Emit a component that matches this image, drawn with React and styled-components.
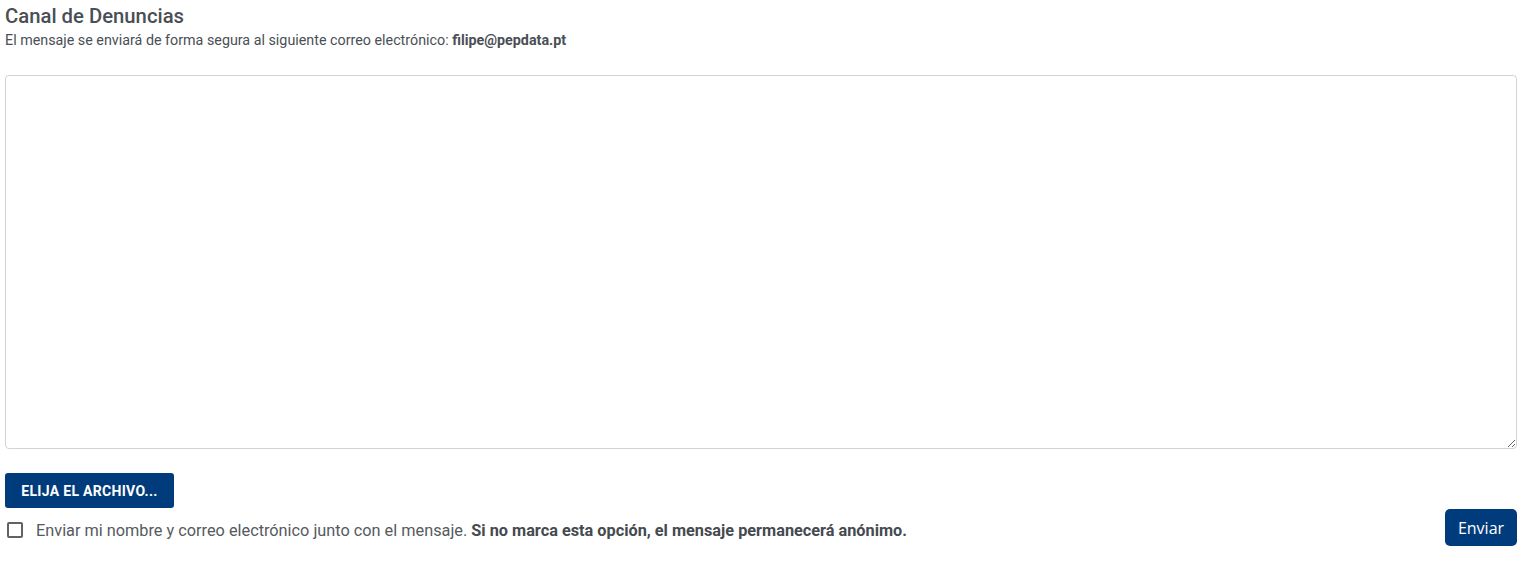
import React, { useState } from "react";
import styled, { createGlobalStyle } from "styled-components";

const GlobalStyle = createGlobalStyle`
  body {
    margin: 0;
    background: #fff;
    font-family: Roboto, "Liberation Sans", sans-serif;
  }
`;

const Page = styled.div`
  padding: 4px 16px 16px 5px;
`;

const Title = styled.h2`
  margin: 0;
  font-size: 20.3px;
  font-weight: 500;
  line-height: 24px;
  color: #4a4f55;
`;

const Subtitle = styled.p`
  margin: 2px 0 0;
  font-size: 14.3px;
  line-height: 20px;
  color: #4a4f55;
  b {
    font-weight: 700;
  }
`;

const Message = styled.textarea`
  display: block;
  box-sizing: border-box;
  width: 100%;
  height: 374px;
  margin-top: 25px;
  border: 1px solid #d0d4d9;
  border-radius: 4px;
  resize: vertical;
  outline: none;
  padding: 8px 12px;
  font-family: inherit;
  font-size: 14px;
`;

const FileButton = styled.label`
  display: inline-flex;
  align-items: center;
  justify-content: center;
  width: 169px;
  height: 35px;
  margin-top: 24px;
  border-radius: 3px;
  background: #003c7c;
  color: #fff;
  font-size: 14px;
  font-weight: 700;
  letter-spacing: 0.3px;
  text-transform: uppercase;
  cursor: pointer;
  input {
    display: none;
  }
`;

const Footer = styled.div`
  display: flex;
  align-items: center;
  justify-content: space-between;
  margin-top: 1px;
`;

const Consent = styled.label`
  display: flex;
  align-items: center;
  gap: 13px;
  padding: 5px 0 0 2px;
  font-size: 16.3px;
  color: #555a60;
  cursor: pointer;
  b {
    font-weight: 700;
    color: #444a50;
  }
`;

const Box = styled.span`
  box-sizing: border-box;
  width: 16px;
  height: 16px;
  flex-shrink: 0;
  border: 2px solid ${(p) => (p.$on ? "#003c7c" : "#5f6368")};
  background: ${(p) => (p.$on ? "#003c7c" : "#fff")};
  border-radius: 2px;
`;

const SendButton = styled.button`
  width: 72px;
  height: 37px;
  border: none;
  border-radius: 5px;
  background: #003c7c;
  color: #fff;
  font-family: "Open Sans", "Noto Sans", sans-serif;
  font-size: 16px;
  cursor: pointer;
`;

export default function App() {
  const [named, setNamed] = useState(false);
  return (
    <Page>
      <GlobalStyle />
      <Title>Canal de Denuncias</Title>
      <Subtitle>
        El mensaje se enviará de forma segura al siguiente correo electrónico:{" "}
        <b>filipe@pepdata.pt</b>
      </Subtitle>
      <Message />
      <FileButton>
        Elija el archivo...
        <input type="file" />
      </FileButton>
      <Footer>
        <Consent onClick={() => setNamed(!named)}>
          <Box $on={named} />
          <span>
            Enviar mi nombre y correo electrónico junto con el mensaje.{" "}
            <b>Si no marca esta opción, el mensaje permanecerá anónimo.</b>
          </span>
        </Consent>
        <SendButton>Enviar</SendButton>
      </Footer>
    </Page>
  );
}
